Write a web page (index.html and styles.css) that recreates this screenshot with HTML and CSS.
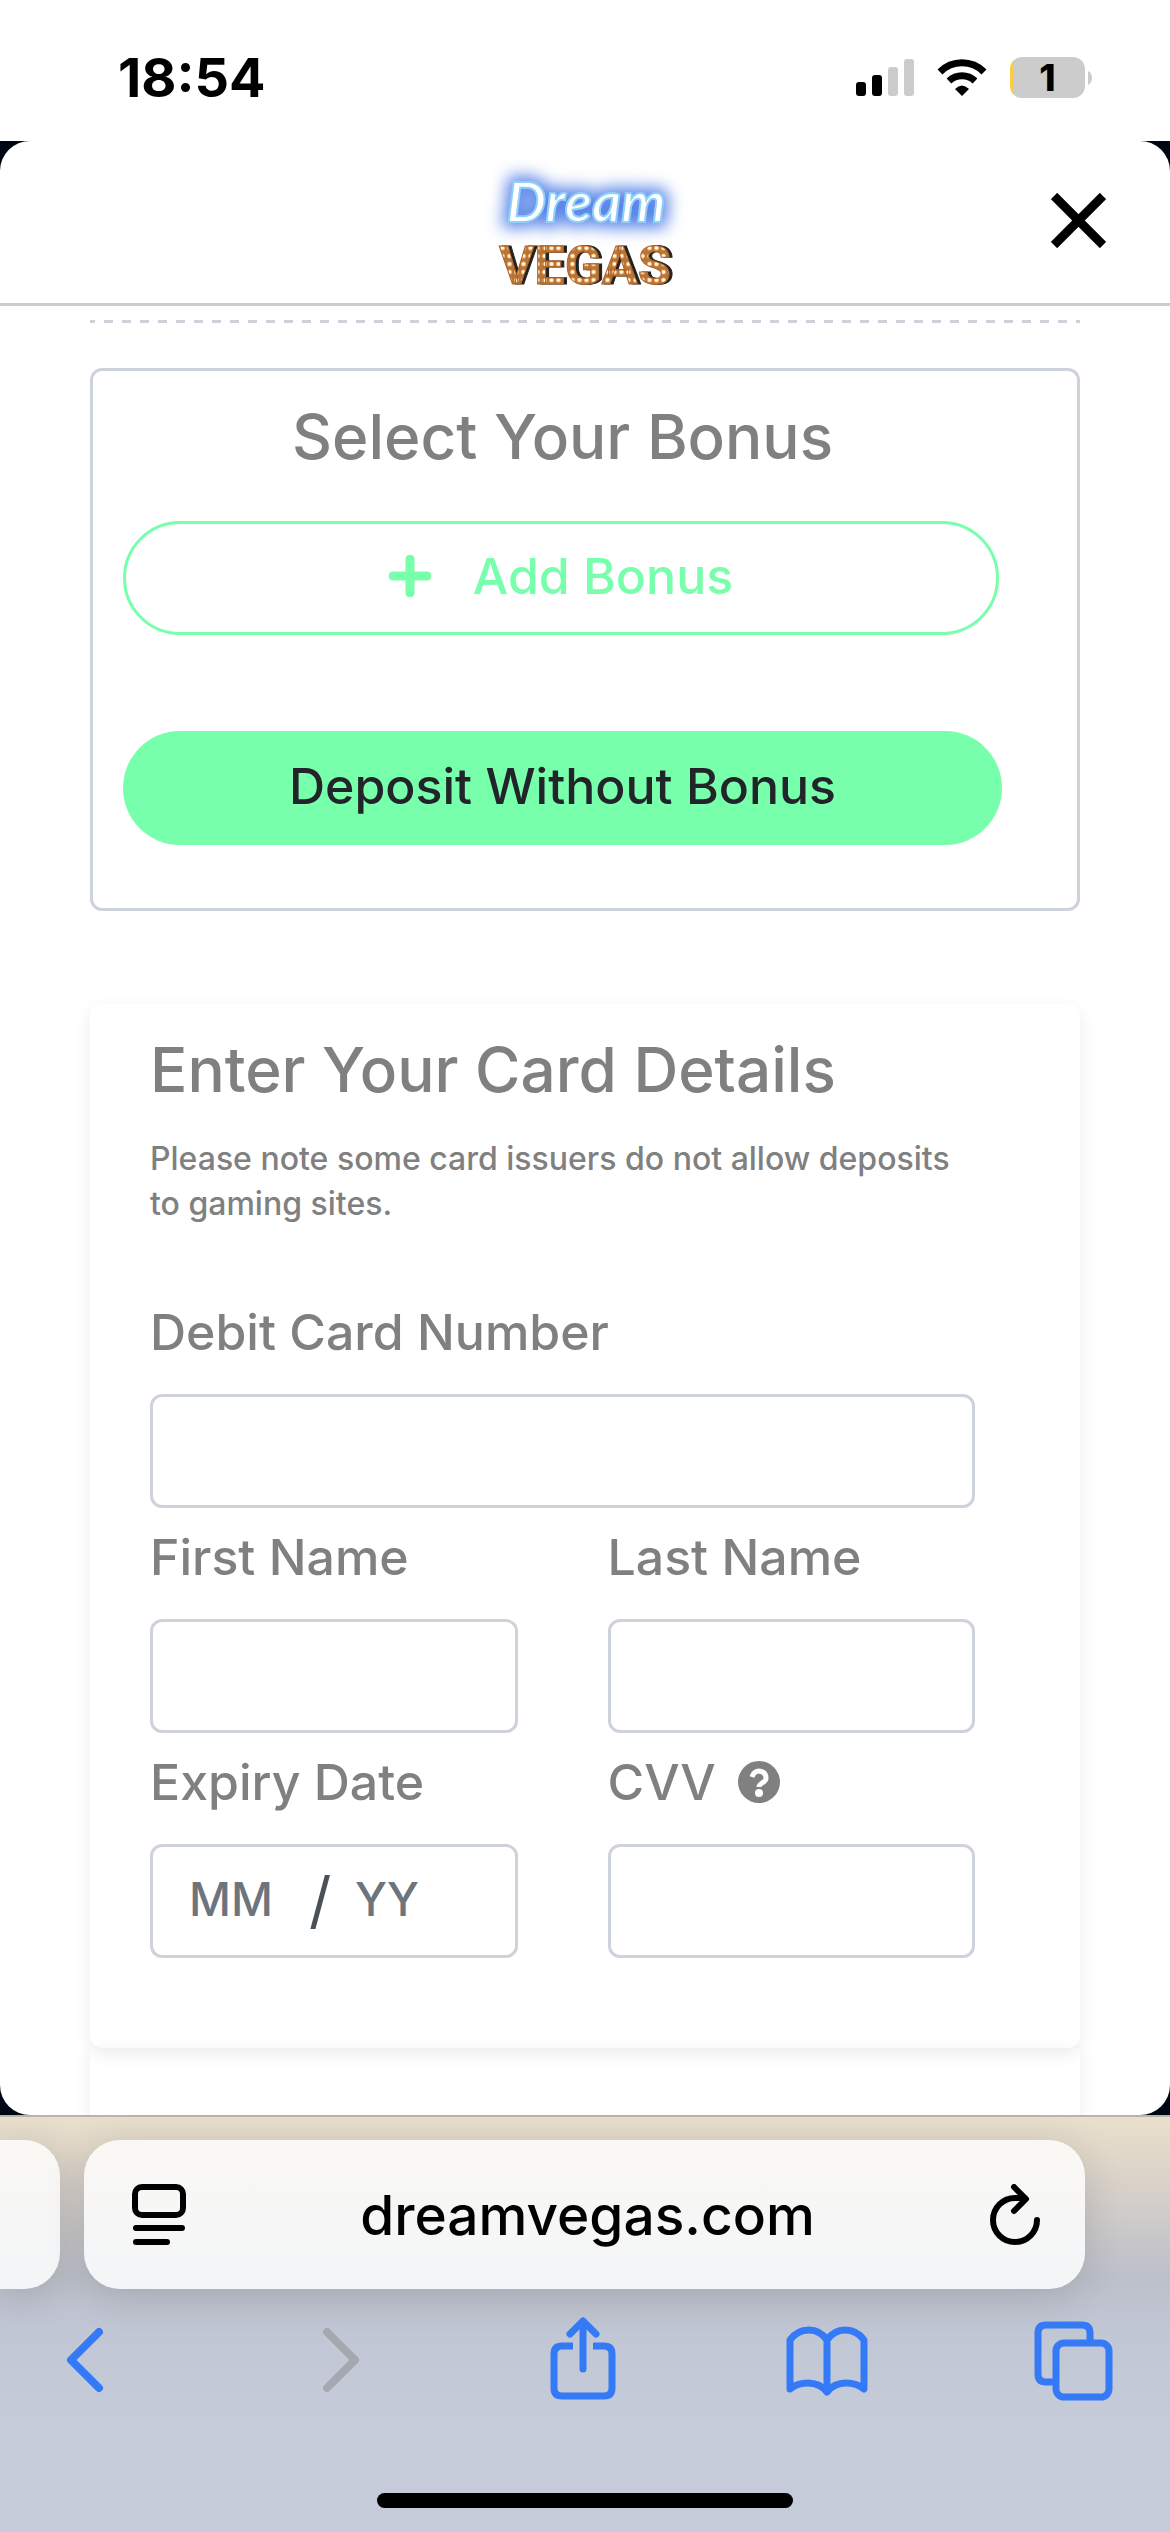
FILE: index.html
```html
<!DOCTYPE html>
<html lang="en">
<head>
<meta charset="utf-8">
<meta name="viewport" content="width=device-width">
<title>Dream Vegas</title>
<link rel="stylesheet" href="styles.css">
</head>

<body>
	<div class="statusbar">
		<span class="time">18:54</span>
		<div class="status-icons">
			<svg width="58" height="38" viewBox="0 0 58 38">
				<rect x="0" y="23" width="10" height="14" rx="3"/>
				<rect x="16" y="16" width="10" height="21" rx="3"/>
				<rect x="32" y="8" width="10" height="29" rx="3" fill="#ccc"/>
				<rect x="48" y="0" width="10" height="37" rx="3" fill="#ccc"/>
			</svg>
			<svg width="50" height="38" viewBox="0 0 50 38">
				<path d="M3 13 A31 31 0 0 1 47 13" fill="none" stroke="#000" stroke-width="7"/>
				<path d="M12 22 A19 19 0 0 1 38 22" fill="none" stroke="#000" stroke-width="7"/>
				<path d="M18 30 Q25 23 32 30 L25 37 Z"/>
			</svg>
			<div class="battery">1</div>
			<svg class="battery-tip" width="4" height="14" viewBox="0 0 4 14">
				<path d="M0 0 Q4 2 4 7 Q4 12 0 14 Z" fill="#ccc"/>
			</svg>
		</div>
	</div>

	<div class="page">
		<div class="sheet">
			<header class="header">
				<svg class="logo" width="230" height="150" viewBox="0 0 230 150">
					<defs>
						<pattern id="bulbs" width="7" height="8" x="1" y="3" patternUnits="userSpaceOnUse">
							<rect width="7" height="8" fill="#b9743a"/>
							<circle cx="3.5" cy="4" r="2.6" fill="#eda75c"/>
							<circle cx="3.5" cy="4" r="1.8" fill="#fff6e0"/>
						</pattern>
						<filter id="glow" x="-30%" y="-50%" width="160%" height="200%">
							<feGaussianBlur stdDeviation="8"/>
						</filter>
					</defs>
					<text class="dream dream-glow" x="116" y="77" filter="url(#glow)" aria-hidden="true">Dream</text>
					<text class="dream" x="116" y="77">Dream</text>
					<text class="vegas vegas-shadow" x="118" y="139" aria-hidden="true">VEGAS</text>
					<text class="vegas" x="115" y="139">VEGAS</text>
				</svg>
				<button type="button" class="close" aria-label="Close">
					<svg width="55" height="55" viewBox="0 0 55 55">
						<path d="M3 3 L52 52 M52 3 L3 52" stroke="#000" stroke-width="9"/>
					</svg>
				</button>
			</header>

			<div class="dashes"></div>

			<section class="bonus">
				<h2>Select Your Bonus</h2>
				<button type="button" class="btn btn-outline">
					<svg width="42" height="42" viewBox="0 0 42 42">
						<path d="M21 4 V38 M4 21 H38" stroke="#78ffac" stroke-width="9" stroke-linecap="round"/>
					</svg>
					Add Bonus
				</button>
				<button type="button" class="btn btn-fill">Deposit Without Bonus</button>
			</section>

			<form class="card">
				<h2>Enter Your Card Details</h2>
				<p class="note">Please note some card issuers do not allow deposits to gaming sites.</p>
				<div class="fields">
					<div class="field wide">
						<label for="cardNumber">Debit Card Number</label>
						<input type="text" id="cardNumber" class="box">
					</div>
					<div class="field">
						<label for="firstName">First Name</label>
						<input type="text" id="firstName" class="box">
					</div>
					<div class="field">
						<label for="lastName">Last Name</label>
						<input type="text" id="lastName" class="box">
					</div>
					<div class="field">
						<label for="month">Expiry Date</label>
						<div class="box expiry">
							<input type="text" id="month" placeholder="MM" maxlength="2">
							<span class="slash">/</span>
							<input type="text" id="year" placeholder="YY" maxlength="2" aria-label="Expiry year">
						</div>
					</div>
					<div class="field">
						<label for="cvv">CVV
							<svg width="42" height="42" viewBox="0 0 42 42">
								<circle cx="21" cy="21" r="21" fill="#808080"/>
								<path d="M14 16 Q16 10 21 10 Q28 11 28 17 Q28 20 24 22 Q21 24 21 26" fill="none" stroke="#fff" stroke-width="5"/>
								<circle cx="21" cy="32" r="4" fill="#fff"/>
							</svg>
						</label>
						<input type="text" id="cvv" class="box">
					</div>
				</div>
			</form>
			<div class="card-next"></div>
		</div>
	</div>

	<footer class="browser">
		<div class="tabs">
			<div class="tab tab-prev"></div>
			<div class="tab">
				<button type="button" aria-label="Page settings">
					<svg width="54" height="62" viewBox="0 0 54 62">
						<rect x="3" y="3" width="48" height="28" rx="7" fill="none" stroke="#000" stroke-width="6"/>
						<path d="M4 44 H50 M4 58 H35" stroke="#000" stroke-width="6" stroke-linecap="round"/>
					</svg>
				</button>
				<a href="#" class="url">dreamvegas.com</a>
				<button type="button" aria-label="Reload">
					<svg width="52" height="62" viewBox="0 0 52 62">
						<path d="M48 36 A22 22 0 1 1 26 14 L36 14 M25 3 L37 15 L25 27" fill="none" stroke="#000" stroke-width="6" stroke-linecap="round" stroke-linejoin="round"/>
					</svg>
				</button>
			</div>
		</div>
		<nav class="toolbar">
			<button type="button" aria-label="Back">
				<svg width="38" height="84" viewBox="0 0 38 84">
					<path d="M33 15 L5 43 L33 71" stroke-width="8"/>
				</svg>
			</button>
			<button type="button" aria-label="Forward" class="off">
				<svg width="56" height="84" viewBox="0 0 56 84">
					<path d="M23 15 L51 43 L23 71" stroke-width="8"/>
				</svg>
			</button>
			<button type="button" aria-label="Share">
				<svg width="72" height="84" viewBox="0 0 72 84">
					<path d="M29 29 H18 Q10 29 10 37 V71 Q10 79 18 79 H60 Q68 79 68 71 V37 Q68 29 60 29 H49" stroke-linecap="butt"/>
					<path d="M39 52 V4 M26 17 L39 4 L52 17"/>
				</svg>
			</button>
			<button type="button" aria-label="Bookmarks">
				<svg width="82" height="84" viewBox="0 0 82 84">
					<path d="M41 23 Q34 13 23 13 Q11 13 4 23 V72 Q11 66 22 66 Q34 66 41 75 Q48 66 60 66 Q71 66 78 72 V23 Q71 13 59 13 Q48 13 41 23 V73"/>
				</svg>
			</button>
			<button type="button" aria-label="Tabs">
				<svg width="80" height="84" viewBox="0 0 80 84">
					<path d="M22 65 H12 Q4 65 4 57 V16 Q4 8 12 8 H48 Q56 8 56 16 V26" stroke-linecap="butt"/>
					<rect x="22" y="26" width="53" height="54" rx="8"/>
				</svg>
			</button>
		</nav>
		<div class="home-bar"></div>
	</footer>
</body>
</html>
```
FILE: styles.css
```css
* {
	box-sizing: border-box;
}

body {
	margin: 0;
	min-height: 100vh;
	display: flex;
	flex-direction: column;
	font-family: Inter, sans-serif;
	font-weight: 500;
	background-color: #ffffff;
}

button {
	padding: 0;
	border: none;
	background: none;
	font: inherit;
	cursor: pointer;
}

svg {
	display: block;
	flex-shrink: 0;
}

/* status bar */
.statusbar {
	display: flex;
	justify-content: space-between;
	align-items: center;
	height: 141px;
	padding: 14px 78px 0 118px;
}

.time {
	font-size: 54px;
	font-weight: 700;
}

.status-icons {
	display: flex;
	align-items: center;
	gap: 23px;
}

.battery {
	width: 75px;
	height: 41px;
	border-radius: 12px;
	background: linear-gradient(to right, #f7ce46 3px, #cccccc 3px);
	font-size: 37px;
	font-weight: 800;
	line-height: 41px;
	text-align: center;
}

.battery-tip {
	margin-left: -20px;
}

/* page */
.page {
	background-color: #000714;
}

.sheet {
	border-radius: 30px;
	background-color: #ffffff;
	overflow: hidden;
}

.header {
	display: grid;
	grid-template-columns: 1fr auto 1fr;
	align-items: center;
	height: 165px;
	padding: 0 64px 4px;
	border-bottom: 3px solid #cccccc;
}

.logo {
	grid-column: 2;
}

.close {
	justify-self: end;
}

.dream {
	font-family: Lato, sans-serif;
	font-size: 56px;
	font-style: italic;
	font-weight: 700;
	text-anchor: middle;
	fill: #ffffff;
	stroke: #8fd0fa;
	stroke-width: 2px;
}

.dream-glow {
	fill: #5c86e8;
	stroke: #5c86e8;
	stroke-width: 12px;
}

.vegas {
	font-family: Roboto, sans-serif;
	font-size: 54px;
	font-weight: 700;
	text-anchor: middle;
	fill: url(#bulbs);
	stroke: #a8642a;
	stroke-width: 1px;
}

.vegas-shadow {
	fill: #222222;
	stroke: #222222;
}

.dashes {
	height: 3px;
	margin: 14px 90px 45px;
	background: repeating-linear-gradient(to right, #cfd0da 0 9px, transparent 9px 18px) -4px 0;
}

h2 {
	margin: 0;
	font-size: 62px;
	font-weight: 500;
	line-height: 72px;
	color: #808080;
}

.bonus {
	display: flex;
	flex-direction: column;
	margin: 0 90px 93px;
	padding: 30px 75px 63px 30px;
	border: 3px solid #ced2da;
	border-radius: 12px;
	text-align: center;
}

.btn {
	display: flex;
	align-items: center;
	justify-content: center;
	gap: 42px;
	height: 114px;
	padding-bottom: 4px;
	border-radius: 57px;
	font-size: 50px;
}

.btn-outline {
	margin: 48px 3px 96px 0;
	border: 3px solid #78ffac;
	color: #78ffac;
}

.btn-fill {
	background-color: #78ffac;
	color: #212529;
}

.card {
	margin: 0 90px;
	padding: 30px 105px 90px 60px;
	border-radius: 12px;
	box-shadow: 0 6px 18px rgba(0, 0, 0, 0.08);
}

.note {
	margin: 30px 0 57px;
	font-size: 32px;
	line-height: 45px;
	color: #808080;
}

.fields {
	display: grid;
	grid-template-columns: 1fr 1fr;
	column-gap: 90px;
}

.wide {
	grid-column: 1 / 3;
}

label {
	display: flex;
	align-items: center;
	gap: 22px;
	height: 111px;
	padding-bottom: 14px;
	font-size: 50px;
	color: #808080;
}

.box {
	display: block;
	width: 100%;
	height: 114px;
	padding: 0 36px;
	border: 3px solid #ced2da;
	border-radius: 12px;
	background-color: #ffffff;
	font: inherit;
	font-size: 46px;
	color: #495057;
}

.expiry {
	display: flex;
	align-items: center;
	padding-bottom: 4px;
}

.expiry input {
	width: 120px;
	padding: 0;
	border: none;
	background: none;
	font: inherit;
}

.expiry input::placeholder {
	color: #6c757d;
}

.slash {
	width: 46px;
	font-size: 62px;
	font-weight: 400;
}

.card-next {
	height: 67px;
	margin: 0 90px;
	box-shadow: 0 6px 18px rgba(0, 0, 0, 0.08);
}

/* browser bar */
.browser {
	flex: 1;
	border-top: 2px solid #b9b4a8;
	background: linear-gradient(#e9dfcc 0, #ddd5c9 50px, #bcc0ca 160px, #c0c6d3 210px, #c5cbd8 300px);
	overflow: hidden;
}

.tabs {
	display: flex;
	gap: 24px;
	padding: 23px 85px 0 0;
}

.tab {
	flex: 1;
	display: flex;
	align-items: center;
	justify-content: space-between;
	height: 149px;
	padding: 0 44px 0 48px;
	border-radius: 36px;
	background: linear-gradient(#faf8f4, #f3f5f8);
	box-shadow: 0 6px 40px rgba(0, 0, 0, 0.14);
}

.tab-prev {
	flex: 0 0 60px;
	padding: 0;
	border-radius: 0 36px 36px 0;
}

.url {
	font-size: 55px;
	color: #000000;
	text-decoration: none;
}

.toolbar {
	display: flex;
	justify-content: space-between;
	padding: 28px 55px 0 44px;
}

.toolbar button {
	display: flex;
	justify-content: center;
	width: 82px;
}

.toolbar svg {
	fill: none;
	stroke: #347af6;
	stroke-width: 7px;
	stroke-linecap: round;
	stroke-linejoin: round;
}

.toolbar .off svg {
	stroke: #a5a8af;
}

.home-bar {
	width: 416px;
	height: 15px;
	margin: 92px auto 24px;
	border-radius: 8px;
	background-color: #000000;
}
```
